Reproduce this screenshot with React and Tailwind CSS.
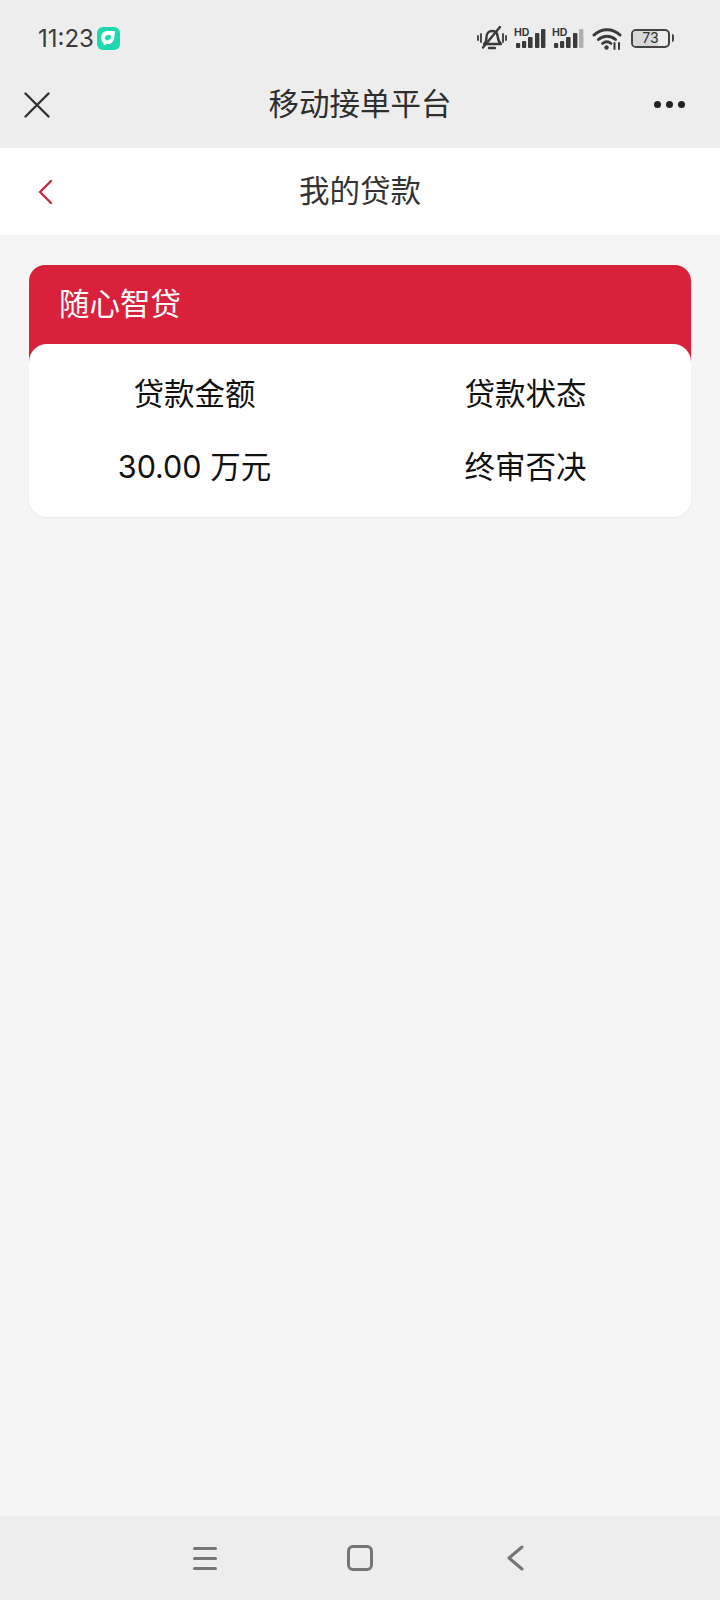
const SANS = "font-['Inter','Noto_Sans_CJK_SC',sans-serif]"

function MuteIcon() {
  return (
    <svg width="30" height="24" viewBox="0 0 30 24" fill="none" stroke="#3a3a3a" strokeLinecap="round">
      <path d="M7 18c2-1.500 2.500-3.500 2.500-7 0-3.500 2.500-6 5.500-6s5 1.500 5.500 4.500c.5 3 .5 6 3.500 8.500z" strokeWidth="2.400" strokeLinejoin="round" />
      <path d="M12 22h6" strokeWidth="2.400" />
      <path d="M6 21.500 23 1" strokeWidth="2.400" />
      <path d="M4 8v8M1 10v4M26 8v8M29 10v4" strokeWidth="1.800" />
    </svg>
  )
}

function Signal({ lastBar }) {
  return (
    <svg width="32" height="22" viewBox="0 0 32 22">
      <text x="0" y="8.500" fontSize="10.500" fontWeight="700" fill="#3a3a3a" fontFamily="Inter, sans-serif">HD</text>
      <rect x="2" y="16" width="4.200" height="5" rx="1" fill="#3a3a3a" />
      <rect x="8" y="14" width="4.200" height="7" rx="1" fill="#3a3a3a" />
      <rect x="14" y="10" width="4.600" height="11" rx="1" fill="#3a3a3a" />
      <rect x="21" y="6" width="4.400" height="15" rx="1" fill="#3a3a3a" />
      <rect x="27" y="2" width="4.400" height="19" rx="1" fill={lastBar} />
    </svg>
  )
}

function Wifi() {
  return (
    <svg width="30" height="23" viewBox="0 0 30 23" fill="none" stroke="#3a3a3a" strokeLinecap="round">
      <path d="M2 8c7.500-7 18.500-7 26 0" strokeWidth="3" />
      <path d="M6.500 12.500c5-4.500 12-4.500 17 0" strokeWidth="3" />
      <path d="M10.500 16.500c2.500-2 6-2 8.500 0" strokeWidth="2.800" />
      <circle cx="14.500" cy="20.500" r="2.200" fill="#3a3a3a" stroke="none" />
      <path d="M22.500 22v-6M27 22v-6" strokeWidth="2" />
    </svg>
  )
}

function Battery() {
  return (
    <div className="flex items-center gap-[2px]">
      <div className="relative flex h-[19px] w-[39px] items-center justify-center overflow-hidden rounded-[5px] border-2 border-[#444444]">
        <div className="absolute inset-y-0 left-0 w-[70%] bg-[#d8d8d8]" />
        <span className={`relative text-[14px] leading-none text-[#333333] ${SANS}`}>73</span>
      </div>
      <div className="h-[8px] w-[2px] rounded-r-sm bg-[#444444]" />
    </div>
  )
}

export default function App() {
  return (
    <div className={`flex min-h-[1600px] flex-col bg-[#f5f5f5] ${SANS}`}>
      {/* status bar + wechat title */}
      <div className="h-[148px] shrink-0 bg-[#ededed]">
        <div className="flex h-[76px] items-center justify-between pl-[38px] pr-[46px]">
          <div className="flex items-center gap-[3px]">
            <span className="mt-[1px] text-[24px] leading-none text-[#3a3a3a]">11:23</span>
            <div className="flex h-[23px] w-[23px] items-center justify-center rounded-[6px] bg-[#1fd8b0]">
              <svg width="18" height="18" viewBox="0 0 18 18">
                <path d="M8 2h8l-.8 7.500C14.700 13 12 15 9 15c-1.500 0-3 .6-4.500 1.500.6-1.200.4-2.200-.5-3C2.800 12.300 2 10.800 2 9c0-4 2.800-7 6-7z" fill="#ffffff" />
                <ellipse cx="9" cy="8.700" rx="3.200" ry="2.500" fill="#1fd8b0" transform="rotate(-30 9 8.700)" />
              </svg>
            </div>
          </div>
          <div className="flex items-center">
            <MuteIcon />
            <div className="ml-[7px]"><Signal lastBar="#3a3a3a" /></div>
            <div className="ml-[6px]"><Signal lastBar="#b0b0b0" /></div>
            <div className="ml-[8px]"><Wifi /></div>
            <div className="ml-[9px]"><Battery /></div>
          </div>
        </div>
        <div className="grid h-[57px] grid-cols-[1fr_auto_1fr] items-center px-[24px]">
          <svg width="26" height="26" viewBox="0 0 26 26" fill="none" stroke="#333333" strokeWidth="2.400" strokeLinecap="round">
            <path d="M1.500 1.500l23 23M24.500 1.500l-23 23" />
          </svg>
          <span className="text-[30.5px] leading-none text-[#2e2e2e]">移动接单平台</span>
          <div className="mr-[11px] flex justify-end gap-[5px]">
            <div className="h-[7px] w-[7px] rounded-full bg-[#222222]" />
            <div className="h-[7px] w-[7px] rounded-full bg-[#222222]" />
            <div className="h-[7px] w-[7px] rounded-full bg-[#222222]" />
          </div>
        </div>
      </div>

      {/* page header */}
      <div className="relative flex h-[87px] shrink-0 items-center justify-center bg-white">
        <svg className="absolute left-[37px] top-[31px]" width="17" height="26" viewBox="0 0 17 26" fill="none" stroke="#c7283f" strokeWidth="2.400" strokeLinecap="round" strokeLinejoin="round">
          <path d="M14 2 3 13l11 11" />
        </svg>
        <span className="text-[30.5px] leading-none text-[#333333]">我的贷款</span>
      </div>

      {/* loan card */}
      <div className="flex-1 px-[29px] pt-[30px]">
        <div className="flex h-[100px] items-start rounded-t-[16px] bg-[#d9213b] pl-[30px] pt-[24px] text-[30.5px] leading-none text-white">随心智贷</div>
        <div className="relative -mt-[21px] grid h-[173px] grid-cols-2 content-start rounded-[18px] bg-white pt-[35px] text-center text-[30.5px] leading-none text-[#111111] shadow-[0_1px_2px_rgba(0,0,0,0.05)]">
          <div>贷款金额</div>
          <div>贷款状态</div>
          <div className="mt-[42px]">30.00 万元</div>
          <div className="mt-[42px]">终审否决</div>
        </div>
      </div>

      {/* android nav bar */}
      <div className="flex h-[84px] shrink-0 items-center bg-[#ededed] pl-[193px]">
        <div className="flex w-[24px] flex-col gap-[7px]">
          <div className="h-[3px] rounded-full bg-[#757575]" />
          <div className="h-[3px] rounded-full bg-[#757575]" />
          <div className="h-[3px] rounded-full bg-[#757575]" />
        </div>
        <div className="ml-[130px] h-[26px] w-[26px] rounded-[6px] border-[3px] border-[#757575]" />
        <svg className="ml-[134px]" width="17" height="26" viewBox="0 0 17 26" fill="none" stroke="#757575" strokeWidth="3" strokeLinecap="round" strokeLinejoin="round">
          <path d="M15 2 2 13l13 11" />
        </svg>
      </div>
    </div>
  )
}
